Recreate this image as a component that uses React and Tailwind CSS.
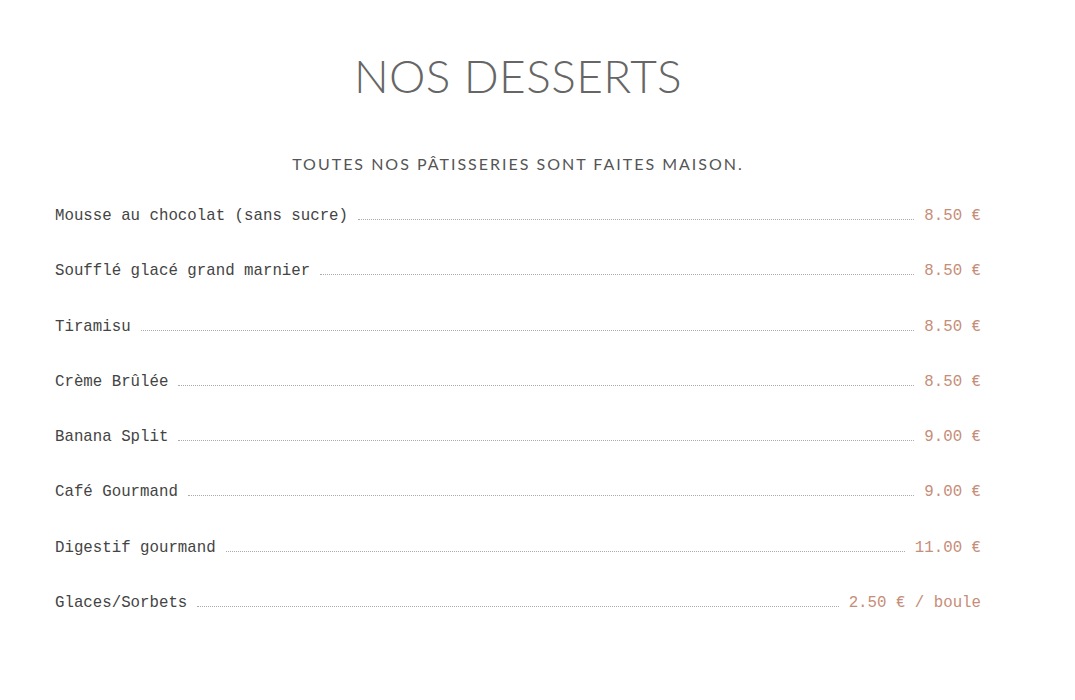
import React from "react";

const desserts = [
  { name: "Mousse au chocolat (sans sucre)", price: "8.50 €" },
  { name: "Soufflé glacé grand marnier", price: "8.50 €" },
  { name: "Tiramisu", price: "8.50 €" },
  { name: "Crème Brûlée", price: "8.50 €" },
  { name: "Banana Split", price: "9.00 €" },
  { name: "Café Gourmand", price: "9.00 €" },
  { name: "Digestif gourmand", price: "11.00 €" },
  { name: "Glaces/Sorbets", price: "2.50 € / boule" },
];

const App = () => {
  return (
    <div className="min-h-[700px] bg-white pl-[55px] pr-[94px] pt-[50px]">
      <h1 className="text-center text-[46px] leading-[52px] font-light tracking-[0.4px] text-[#666] [font-family:Lato,sans-serif]">
        NOS DESSERTS
      </h1>
      <p className="mt-[50px] text-center text-[16px] leading-[24px] tracking-[2px] text-[#555] [font-family:Lato,sans-serif]">
        TOUTES NOS PÂTISSERIES SONT FAITES MAISON.
      </p>
      <ul className="mt-[16px] [font-family:'Liberation_Mono',monospace] text-[15.75px]">
        {desserts.map((d) => (
          <li key={d.name} className="flex items-baseline h-[55.3px] pt-[13px]">
            <span className="text-[#444] whitespace-nowrap">{d.name}</span>
            <span className="flex-1 mx-[10px] border-b border-dotted border-[#aaa]" />
            <span className="text-[#c68d78] whitespace-nowrap">{d.price}</span>
          </li>
        ))}
      </ul>
    </div>
  );
};

export default App;
